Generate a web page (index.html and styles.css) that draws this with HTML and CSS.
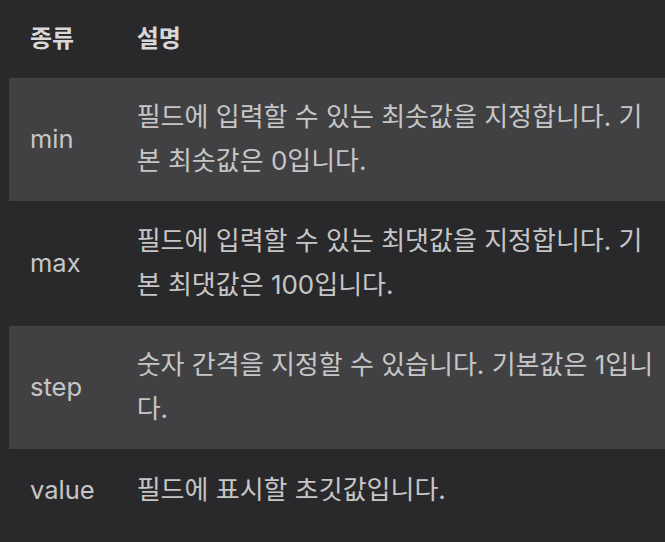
FILE: index.html
```html
<!DOCTYPE html>
<html lang="ko">
<head>
<meta charset="utf-8">
<link rel="stylesheet" href="styles.css">
</head>
<body>
<div class="wrap">
<table class="attrs">
  <thead>
    <tr><th class="c-name">종류</th><th class="c-desc">설명</th></tr>
  </thead>
  <tbody>
    <tr class="odd"><td class="c-name">min</td><td class="c-desc">필드에 입력할 수 있는 최솟값을 지정합니다. 기본 최솟값은 0입니다.</td></tr>
    <tr class="tall"><td class="c-name">max</td><td class="c-desc">필드에 입력할 수 있는 최댓값을 지정합니다. 기본 최댓값은 100입니다.</td></tr>
    <tr class="odd"><td class="c-name">step</td><td class="c-desc">숫자 간격을 지정할 수 있습니다. 기본값은 1입니다.</td></tr>
    <tr class="last"><td class="c-name">value</td><td class="c-desc">필드에 표시할 초깃값입니다.</td></tr>
  </tbody>
</table>
</div>
</body>
</html>
```

FILE: styles.css
```css
html, body {
  margin: 0;
  padding: 0;
  background: #29292c;
  overflow: hidden;
}
.wrap {
  padding-left: 9px;
}
.attrs {
  border-collapse: collapse;
  width: 672px;
  font-family: "Inter", "Noto Sans CJK KR", sans-serif;
  font-size: 24px;
  line-height: 44px;
  color: #c6c6c6;
}
.attrs th, .attrs td {
  padding: 17px 21px;
  text-align: left;
  vertical-align: middle;
}
.attrs th {
  font-weight: 700;
  color: #d8d8d8;
}
.attrs td {
  font-weight: 400;
}
.attrs .c-name {
  width: 64px;
  white-space: nowrap;
}
.attrs td.c-name {
  font-size: 25.5px;
}
.attrs td.c-desc {
  font-size: 26px;
}
.attrs tbody tr td {
  padding-bottom: 18px;
}
.attrs tbody tr.tall td {
  padding-top: 18px;
  padding-bottom: 19px;
}
.attrs tbody tr.last td {
  padding-top: 19px;
  padding-bottom: 20px;
}
.attrs tr.odd {
  background: #414144;
}
```
